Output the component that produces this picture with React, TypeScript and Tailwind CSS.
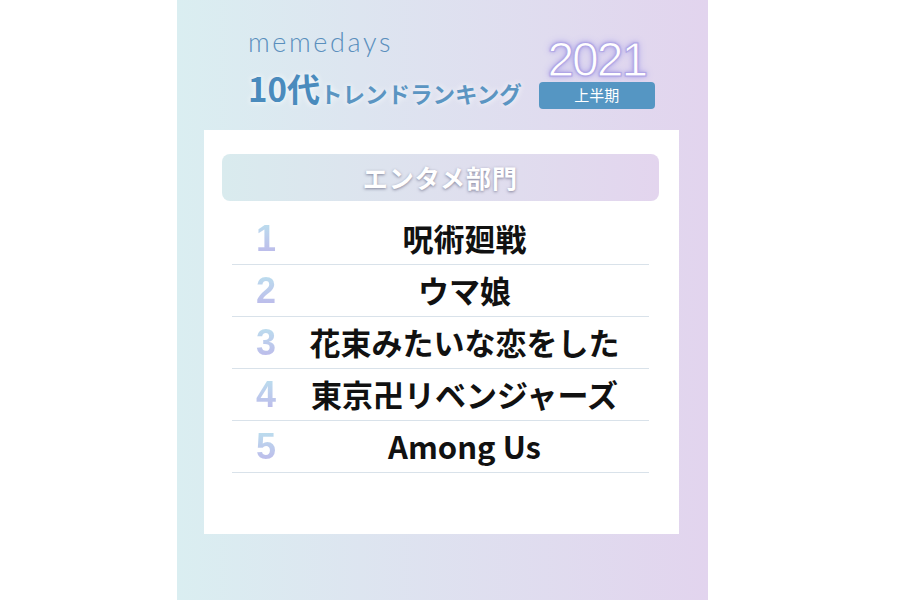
const ranking = [
  { rank: 1, title: "呪術廻戦" },
  { rank: 2, title: "ウマ娘" },
  { rank: 3, title: "花束みたいな恋をした" },
  { rank: 4, title: "東京卍リベンジャーズ" },
  { rank: 5, title: "Among Us" },
];

const jp = "font-['Noto_Sans_CJK_JP','Noto_Sans',sans-serif]";

function RankRow(props: { rank: number; title: string }) {
  return (
    <div className="flex h-[52px] items-center border-b border-[#d9e2ea]">
      <div className="w-[68px] flex justify-center">
        <span className="font-['Liberation_Sans',sans-serif] font-bold text-[36px] leading-none bg-gradient-to-b from-[#bbe0ee] to-[#bcb6ea] bg-clip-text text-transparent">
          {props.rank}
        </span>
      </div>
      <div className={`flex-1 pr-[20px] text-center text-[31px] font-bold text-[#111] ${jp}`}>
        {props.title}
      </div>
    </div>
  );
}

export default function App() {
  return (
    <div className="w-[900px] h-[600px] bg-white">
      <div className="ml-[177px] w-[531px] h-[600px] bg-gradient-to-r from-[#daeef1] to-[#e2d4ee] flex flex-col">
        {/* header */}
        <div className="h-[130px] flex items-end pb-[25px] pl-[71px]">
          <div className="flex flex-col">
            <div className="font-['Lato',sans-serif] font-light text-[27px] leading-none tracking-[2.6px] text-[#5a8fbd] mb-[17px]">
              memedays
            </div>
            <div className={`flex items-end ${jp} font-bold leading-none`}>
              <span className="text-[33px] text-[#4a8bbd] [text-shadow:0_0_6px_#fff]">10代</span>
              <span className="text-[22.5px] text-[#5b95c2] mb-[1px] [text-shadow:0_0_6px_#fff]">トレンドランキング</span>
            </div>
          </div>
          <div className="ml-[17px] mb-[-4px] flex flex-col items-center w-[116px]">
            <div className="font-['Liberation_Sans',sans-serif] text-[48px] leading-none tracking-[-2px] text-white [-webkit-text-stroke:1px_#b0a6e6] [text-shadow:0_0_2px_#a99fe2,0_0_4px_#a99fe2,0_0_8px_#b9b0ee] mb-[-2px]">
              2021
            </div>
            <div className={`w-full h-[27px] rounded-[4px] bg-[#5596c3] text-white text-[15px] flex items-center justify-center ${jp}`}>
              上半期
            </div>
          </div>
        </div>

        {/* card */}
        <div className="ml-[27px] w-[475px] h-[404px] bg-white pt-[24px] pl-[18px] pr-[20px]">
          <div className={`h-[47px] rounded-[8px] bg-gradient-to-r from-[#d9ebee] to-[#e3d5ee] flex items-center justify-center text-white font-bold text-[25px] tracking-[1px] ${jp} [text-shadow:0_1px_3px_rgba(70,70,100,0.6)]`}>
            エンタメ部門
          </div>
          <div className="mt-[12px] mx-[10px] flex flex-col">
            {ranking.map((item) => (
              <RankRow key={item.rank} rank={item.rank} title={item.title} />
            ))}
          </div>
        </div>
      </div>
    </div>
  );
}
